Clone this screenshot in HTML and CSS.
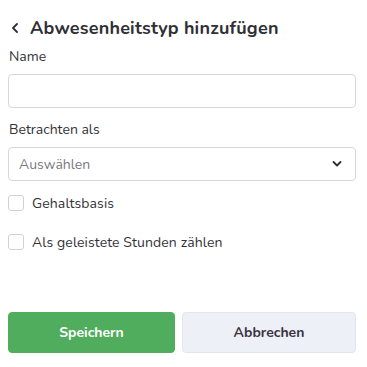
FILE: index.html
```html
<!DOCTYPE html>
<html lang="de">
	<head>
		<meta charset="utf-8">
		<title>Abwesenheitstyp hinzufügen</title>
		<link rel="stylesheet" href="styles.css">
	</head>
	<body>
		<div id="content">
			<div id="header">
				<span class="back">
					<svg width="8" height="10" viewBox="0 0 8 10"><path d="M6 1 L2 5 L6 9" fill="none" stroke="#2f2f33" stroke-width="1.8" stroke-linecap="round" stroke-linejoin="round"/></svg>
				</span>
				<h1>Abwesenheitstyp hinzufügen</h1>
			</div>
			<label class="field-label">Name</label>
			<input class="field" type="text">
			<label class="field-label second">Betrachten als</label>
			<div class="field select">
				<span class="placeholder">Auswählen</span>
				<svg width="10" height="6" viewBox="0 0 10 6"><path d="M1.5 1 L5 4.5 L8.5 1" fill="none" stroke="#2f2f33" stroke-width="1.8" stroke-linecap="round" stroke-linejoin="round"/></svg>
			</div>
			<div class="check first"><span class="box"></span>Gehaltsbasis</div>
			<div class="check"><span class="box"></span>Als geleistete Stunden zählen</div>
			<div id="buttons">
				<button class="btn save">Speichern</button>
				<button class="btn cancel">Abbrechen</button>
			</div>
		</div>
	</body>
</html>
```
FILE: styles.css
```css
body {
	margin: 0;
	background: #fff;
	color: #333338;
	font-family: Nunito, Lato, "Noto Sans", sans-serif;
}
#content {
	width: 348px;
	padding: 0 8px;
	display: flex;
	flex-direction: column;
}
#header {
	display: flex;
	align-items: center;
	height: 24px;
	margin-top: 16px;
}
.back {
	width: 19px;
	padding-left: 3px;
	display: flex;
}
h1 {
	margin: 0;
	font-size: 18px;
	letter-spacing: 0.2px;
	font-weight: 700;
	color: #2f2f35;
}
.field-label {
	font-size: 14px;
	margin-top: 7px;
	line-height: 20px;
	padding-left: 1px;
}
.field-label.second {
	margin-top: 12px;
}
.field {
	box-sizing: border-box;
	height: 34px;
	border: 1px solid #d6d8dc;
	border-radius: 4px;
	margin-top: 7px;
	width: 348px;
	font: inherit;
}
.select {
	display: flex;
	align-items: center;
	justify-content: space-between;
	padding: 0 13px 0 10px;
}
.placeholder {
	font-size: 14px;
	color: #7a7a80;
}
.check {
	display: flex;
	align-items: center;
	font-size: 14px;
	letter-spacing: 0.1px;
	height: 20px;
	margin-top: 19px;
}
.check.first {
	margin-top: 12px;
}
.box {
	box-sizing: border-box;
	width: 16px;
	height: 16px;
	border: 1px solid #cfd1d6;
	border-radius: 3px;
	margin-right: 8px;
}
#buttons {
	display: flex;
	gap: 7px;
	margin-top: 60px;
}
.btn {
	height: 41px;
	border-radius: 4px;
	font-family: inherit;
	font-size: 14px;
	font-weight: 700;
	cursor: pointer;
}
.save {
	width: 167px;
	background: #4fad5d;
	border: 1px solid #4fad5d;
	color: #fff;
}
.cancel {
	width: 174px;
	background: #eef0f7;
	border: 1px solid #e3e5ec;
	color: #3a3240;
}
```
